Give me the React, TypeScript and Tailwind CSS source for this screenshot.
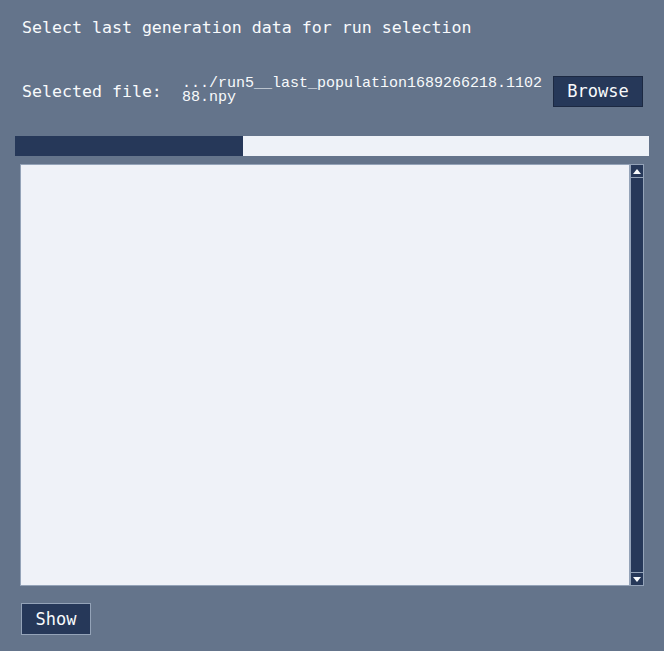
import React from "react";

const mono = { fontFamily: '"DejaVu Sans Mono", "Liberation Mono", monospace' };
const thin = { fontFamily: '"Liberation Mono", "DejaVu Sans Mono", monospace' };

export default function App() {
  return (
    <div
      className="w-[664px] h-[651px] bg-[#64748b] text-[#f8fafc] flex flex-col"
      style={mono}
    >
      <div className="pl-[22px] pt-[17px] h-[60px] text-[16.6px] leading-[22px]">
        Select last generation data for run selection
      </div>

      <div className="flex items-start h-[76px] pt-[16px]">
        <div className="pl-[22px] w-[182px] pt-[4px] text-[16.6px] leading-[24px]">
          Selected file:
        </div>
        <div
          className="w-[362px] text-[15px] leading-[14px] pt-[1px] break-all"
          style={thin}
        >
          .../run5__last_population1689266218.110288.npy
        </div>
        <button className="ml-[9px] w-[90px] h-[31px] bg-[#263859] border border-[#1c2942] text-[17px] text-[#f8fafc] leading-none">
          Browse
        </button>
      </div>

      <div className="mx-[15px] h-[20px] bg-[#eef2f8] flex">
        <div className="w-[228px] h-full bg-[#263859]" />
      </div>

      <div className="flex ml-[20px] mt-[8px] h-[422px] w-[624px]">
        <div className="flex-1 bg-[#eff2f8] border border-[#94a3b8]" />
        <div className="w-[14px] bg-[#263859] border border-[#94a3b8] flex flex-col justify-between">
          <div className="h-[13px] border-b border-[#94a3b8] flex items-center justify-center">
            <svg width="8" height="5" viewBox="0 0 8 5">
              <path d="M4 0 L8 5 L0 5 Z" fill="#f8fafc" />
            </svg>
          </div>
          <div className="h-[13px] border-t border-[#94a3b8] flex items-center justify-center">
            <svg width="8" height="5" viewBox="0 0 8 5">
              <path d="M0 0 L8 0 L4 5 Z" fill="#f8fafc" />
            </svg>
          </div>
        </div>
      </div>

      <div className="pl-[21px] pt-[17px]">
        <button className="w-[70px] h-[32px] bg-[#263859] border border-[#94a3b8] text-[17px] text-[#f8fafc] leading-none">
          Show
        </button>
      </div>
    </div>
  );
}
